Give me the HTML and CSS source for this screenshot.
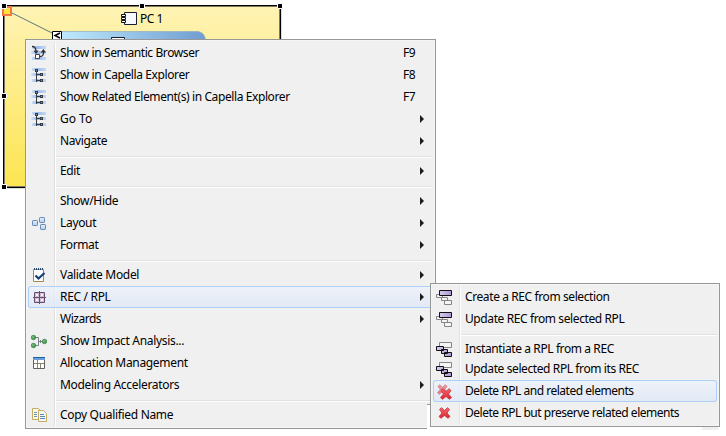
FILE: index.html
```html
<!DOCTYPE html>
<html lang="en">
<head>
<meta charset="utf-8">
<title>Physical component diagram</title>
<link rel="stylesheet" href="styles.css">
</head>
<body>
<svg class="defs" width="0" height="0">
  <defs>
    <linearGradient id="band"><stop offset="0" stop-color="#c9dcf5" stop-opacity=".7"/><stop offset=".4" stop-color="#94baee"/><stop offset="1" stop-color="#b9d2f4" stop-opacity=".8"/></linearGradient>
    <linearGradient id="lilac"><stop offset="0" stop-color="#d8caee"/><stop offset="1" stop-color="#ac98d6"/></linearGradient>
    <linearGradient id="tile" x2="0" y2="1"><stop offset="0" stop-color="#e8f0fa"/><stop offset="1" stop-color="#b4cdea"/></linearGradient>
    <linearGradient id="red" x2="0" y2="1"><stop offset="0" stop-color="#f4686b"/><stop offset="1" stop-color="#dc2430"/></linearGradient>
    <symbol id="bands" viewBox="0 0 16 16"><path fill="url(#band)" d="M1 1h14v3H1zM0 6h15v3H0zM1 12h14v3H1z"/></symbol>
    <symbol id="tree" viewBox="0 0 16 16"><use href="#bands" width="16" height="16"/><path fill="#383b40" d="M4 2h3v3H4zM5 5h1v10H5zM6 7h3v1H6zM6 13h3v1H6zM9 6h3v3H9zM9 12h3v3H9z"/><path fill="#8c9097" d="M5 3h1v1H5zM10 7h1v1h-1zM10 13h1v1h-1z"/></symbol>
    <symbol id="semantic" viewBox="0 0 16 16"><use href="#bands" width="16" height="16"/><path fill="none" stroke="#333" stroke-width="1.3" d="M1 1.500q4 0 4 5M9 11.500q4 0 3.500-5"/><path fill="#333" d="M2.500 5.500h5L5 9zM9.500 7.500h5.500L12.500 4z"/><path fill="#fff" stroke="#444" d="M4.500 9.500h4v4h-4z"/></symbol>
    <symbol id="layout" viewBox="0 0 16 16"><g fill="url(#tile)" stroke="#6589b8"><rect x="1.500" y="5.500" width="5" height="5" rx=".7"/><rect x="8.500" y="2.500" width="5" height="5" rx=".7"/><rect x="9.500" y="9.500" width="5" height="5" rx=".7"/></g></symbol>
    <symbol id="validate" viewBox="0 0 16 16"><path fill="#fff" stroke="#a28a4b" d="M2.500 2.500h10v12h-10z"/><path stroke="#294a6f" stroke-width="2" stroke-dasharray="1 1" d="M3 2h10"/><path fill="none" stroke="#173e75" stroke-width="2.200" d="M4.500 8.500l3 3L13.500 6"/></symbol>
    <symbol id="rec" viewBox="0 0 16 16"><path fill="#f8f2fa" stroke="#694c70" d="M3.500 3.500h10v10h-10z"/><path fill="none" stroke="#694c70" d="M8.500 2v13M2 8.500h13"/><path fill="none" stroke="#c9b8cf" d="M4.500 4.500h3v3h-3zM9.500 4.500h3v3h-3zM4.500 9.500h3v3h-3zM9.500 9.500h3v3h-3z"/></symbol>
    <symbol id="impact" viewBox="0 0 16 16"><path fill="none" stroke="#777f87" d="M4 4.500h3.500v8H4M7.500 8.500H12M9.500 7v3"/><g fill="#4a9d56" stroke="#357d42" stroke-width=".6"><circle cx="2.500" cy="4.500" r="2.300"/><circle cx="2.500" cy="12.500" r="2.300"/><circle cx="13.500" cy="8.500" r="2.300"/></g><g fill="#a3d6a5"><circle cx="2" cy="4" r=".8"/><circle cx="2" cy="12" r=".8"/><circle cx="13" cy="8" r=".8"/></g></symbol>
    <symbol id="table" viewBox="0 0 16 16"><path fill="#fff" stroke="#626262" d="M2.500 2.500h11v11h-11z"/><path fill="#245b9f" d="M2 2h12v1H2z"/><path fill="#6a9edb" d="M2 3h12v2H2z"/><path stroke="#8b846c" fill="none" d="M6.500 5v8M3 8.500h10M9.500 9v4"/></symbol>
    <symbol id="copy" viewBox="0 0 16 16"><path fill="#fff9e2" stroke="#c4ad62" d="M1.500 1.500h6l2 2v9h-8z"/><path stroke="#6c92be" d="M3 5.500h3M3 7.500h3M3 9.500h3"/><path fill="#f4f8fd" stroke="#c4ad62" d="M7.500 3.500h5l3 3v8h-8z"/><path stroke="#5e88b9" d="M9 7.500h4M9 9.500h5M9 11.500h5"/></symbol>
    <symbol id="recTop" viewBox="0 0 16 16"><g fill="#f5f5f5" stroke="#858585"><path d="M.5 5.500h6v3h-6zM5.500 8.500h6v3h-6zM8.500 11.500h7v4h-7z"/></g><path fill="url(#lilac)" stroke="#111" d="M3.500 1.500h12v5h-12z"/></symbol>
    <symbol id="rplTop" viewBox="0 0 16 16"><path fill="#f5f5f5" stroke="#858585" d="M3.500 1.500h12v5h-12z"/><g fill="url(#lilac)" stroke="#111"><path d="M.5 5.500h7v4h-7zM5.500 8.500h6v4h-6zM8.500 11.500h7v4h-7z"/></g></symbol>
    <symbol id="cross" viewBox="0 0 12 12"><path stroke-linejoin="round" stroke="#c92f38" stroke-width=".8" fill="url(#red)" d="M1 2.500L3 .700 6 3.500 9 .700 11 2.500 8.500 6 11.500 9.500 9.500 11.300 6 8.500 2.500 11.300.500 9.500 3.500 6z"/></symbol>
  </defs>
</svg>

<div class="screen">
  <section class="component">
    <svg class="diagram" viewBox="0 0 290 196" width="290" height="196">
      <defs>
        <linearGradient id="yellow" x2="0" y2="1"><stop offset="0" stop-color="#fff3b5"/><stop offset="1" stop-color="#fce551"/></linearGradient>
        <linearGradient id="blue"><stop offset="0" stop-color="#c1ebfe"/><stop offset="1" stop-color="#709dd0"/></linearGradient>
      </defs>
      <path fill="#dedede" d="M5 188h277v1H5zM281 7h1v182h-1z"/>
      <rect x="3.500" y="5.500" width="277" height="182" fill="url(#yellow)" stroke="#000"/>
      <rect x="4.500" y="6.500" width="275" height="180" fill="none" stroke="#7d7966"/>
      <path fill="url(#blue)" stroke="#8caebe" stroke-width=".7" d="M56 31.500h142q7 1 7.500 9v10H56z"/>
      <path fill="#fff" stroke="#14202c" d="M111.500 37.500h13v8h-13z"/>
      <path stroke="#5b7779" d="M12 13l42 21"/>
      <path fill="#ffe13d" stroke="#f4783f" stroke-width="2" d="M3 7h8v8H3z"/>
      <path fill="#fff" stroke="#000" d="M52.500 31.500h9v9h-9z"/>
      <path fill="none" stroke="#000" stroke-width="1.500" d="M60 33l-5 2.500 5 2.500"/>
      <path fill="#f7f9fd" stroke="#172032" d="M124.500 12.500h12v12h-12z"/>
      <g fill="#fff" stroke="#111"><path d="M121.500 14.500h4v2h-4zM121.500 17.500h4v2h-4zM121.500 20.500h4v2h-4z"/></g>
      <g fill="#000" stroke="#fff"><path d="M1.500 3.500h5v5h-5zM139.500 3.500h5v5h-5zM277.500 3.500h5v5h-5zM1.500 93.500h5v5h-5zM1.500 184.500h5v5h-5z"/></g>
    </svg>
    <span class="component-name">PC 1</span>
  </section>

  <nav class="menu main-menu">
    <div class="item"><svg class="icon"><use href="#semantic"/></svg><span class="label">Show in Semantic Browser</span><span class="key">F9</span></div>
    <div class="item"><svg class="icon"><use href="#tree"/></svg><span class="label">Show in Capella Explorer</span><span class="key">F8</span></div>
    <div class="item"><svg class="icon"><use href="#tree"/></svg><span class="label">Show Related Element(s) in Capella Explorer</span><span class="key">F7</span></div>
    <div class="item more"><svg class="icon"><use href="#tree"/></svg><span class="label open">Go To</span></div>
    <div class="item more"><svg class="icon"></svg><span class="label">Navigate</span></div>
    <hr>
    <div class="item more"><svg class="icon"></svg><span class="label">Edit</span></div>
    <hr>
    <div class="item more"><svg class="icon"></svg><span class="label loose">Show/Hide</span></div>
    <div class="item more"><svg class="icon"><use href="#layout"/></svg><span class="label loose">Layout</span></div>
    <div class="item more"><svg class="icon"></svg><span class="label">Format</span></div>
    <hr>
    <div class="item more"><svg class="icon"><use href="#validate"/></svg><span class="label loose">Validate Model</span></div>
    <div class="item more selected"><svg class="icon"><use href="#rec"/></svg><span class="label loose">REC / RPL</span></div>
    <div class="item more"><svg class="icon"></svg><span class="label close">Wizards</span></div>
    <div class="item"><svg class="icon"><use href="#impact"/></svg><span class="label loose">Show Impact Analysis...</span></div>
    <div class="item"><svg class="icon"><use href="#table"/></svg><span class="label loose">Allocation Management</span></div>
    <div class="item more"><svg class="icon"></svg><span class="label loose">Modeling Accelerators</span></div>
    <hr>
    <div class="item"><svg class="icon"><use href="#copy"/></svg><span class="label loose">Copy Qualified Name</span></div>
  </nav>

  <div class="canvas-edge"></div>
  <div class="canvas-corner"></div>

  <nav class="menu sub-menu">
    <div class="item"><svg class="icon"><use href="#recTop"/></svg><span class="label">Create a REC from selection</span></div>
    <div class="item"><svg class="icon"><use href="#recTop"/></svg><span class="label">Update REC from selected RPL</span></div>
    <hr>
    <div class="item tight"><svg class="icon"><use href="#rplTop"/></svg><span class="label">Instantiate a RPL from a REC</span></div>
    <div class="item"><svg class="icon"><use href="#rplTop"/></svg><span class="label">Update selected RPL from its REC</span></div>
    <div class="item selected"><svg class="icon"><use href="#cross" x="1" y="1" width="11" height="11" opacity=".6"/><use href="#cross" x="4" y="5" width="12" height="12"/></svg><span class="label close">Delete RPL and related elements</span></div>
    <div class="item"><svg class="icon"><use href="#cross" x="2" y="2" width="13" height="12"/></svg><span class="label close">Delete RPL but preserve related elements</span></div>
  </nav>
</div>
</body>
</html>
```
FILE: styles.css
```css
body {
  margin: 0;
  background: #fff;
  color: #000;
  font: 12px/22px "Noto Sans", "Open Sans", sans-serif;
}

.defs {
  position: absolute;
}

.screen {
  position: relative;
  width: 726px;
  height: 436px;
  overflow: hidden;
}

.diagram {
  display: block;
}

.component-name {
  position: absolute;
  left: 140px;
  top: 8px;
  letter-spacing: -.5px;
}

.menu {
  position: absolute;
  box-sizing: border-box;
  padding: 2px;
  border: 1px solid #979797;
  background: linear-gradient(90deg, #e0e0e0 1px, #fff 1px) 28px 2px / 2px calc(100% - 4px) no-repeat #f0f0f0;
  box-shadow: inset 0 0 0 1px #f5f5f5;
}

.main-menu {
  left: 25px;
  top: 39px;
  width: 411px;
}

.sub-menu {
  left: 430px;
  top: 283px;
  width: 290px;
}

.canvas-edge {
  position: absolute;
  left: 427px;
  top: 404px;
  width: 9px;
  height: 26px;
  background: #fff;
  border-top: 1px solid #979797;
  box-sizing: border-box;
}

.canvas-corner {
  position: absolute;
  left: 702px;
  top: 427px;
  width: 16px;
  height: 3px;
  background: #efefef;
}

.item {
  display: flex;
  align-items: center;
  box-sizing: border-box;
  height: 22px;
  padding: 0 11px 0 3px;
  border-radius: 3px;
  white-space: nowrap;
}

.tight {
  margin-bottom: -2px;
}

.selected {
  background: linear-gradient(rgba(238, 243, 251, .8), rgba(221, 231, 247, .8));
  box-shadow: inset 0 0 0 1px #aecff7;
}

.icon {
  width: 16px;
  height: 16px;
  margin-right: 13px;
  overflow: visible;
  flex: none;
}

.label {
  flex: 1;
  letter-spacing: -.4px;
}

.loose {
  letter-spacing: -.32px;
}

.close {
  letter-spacing: -.48px;
}

.open {
  letter-spacing: 0;
}

.key {
  width: 19px;
  letter-spacing: -.4px;
}

.more::after {
  content: "";
  border: solid transparent;
  border-width: 4px 0 4px 4px;
  border-left-color: #1c1c1c;
  margin-right: -2px;
}

hr {
  height: 1px;
  margin: 4px 0 2px 28px;
  border: 0;
  border-bottom: 1px solid #fff;
  background: #e0e0e0;
}
```
